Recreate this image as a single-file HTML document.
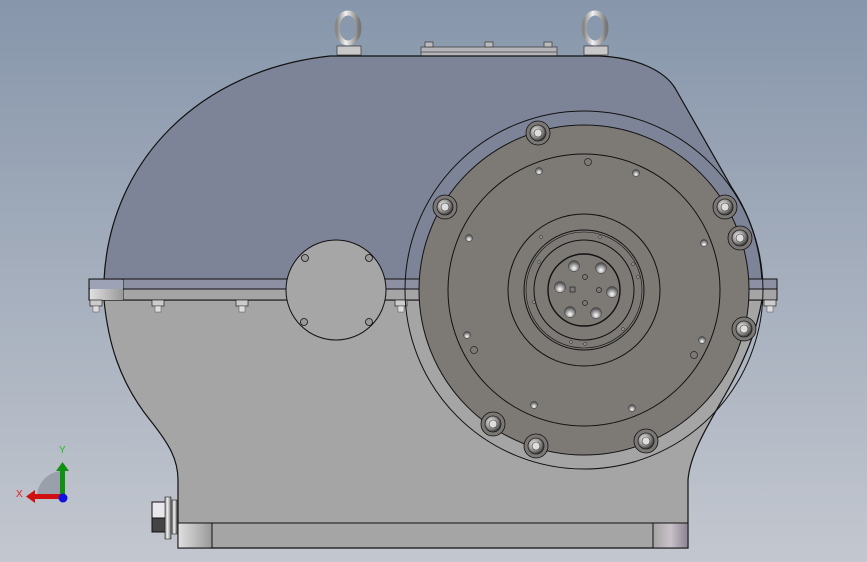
<!DOCTYPE html>
<html><head><meta charset="utf-8"><style>
html,body{margin:0;padding:0;width:867px;height:562px;overflow:hidden}
svg{display:block}
text{font-family:"Liberation Sans",sans-serif}
</style></head><body>
<svg width="867" height="562" viewBox="0 0 867 562" xmlns="http://www.w3.org/2000/svg">
<defs>
<linearGradient id="bg" x1="0" y1="0" x2="0" y2="1">
<stop offset="0" stop-color="#8796ab"/><stop offset="1" stop-color="#c3c7cf"/></linearGradient>
<radialGradient id="bolt" cx="0.4" cy="0.4" r="0.6"><stop offset="0" stop-color="#fff"/><stop offset="0.6" stop-color="#9a9896"/><stop offset="1" stop-color="#3a3a3a"/></radialGradient>
<radialGradient id="hole" cx="0.5" cy="0.7" r="0.6"><stop offset="0" stop-color="#fff"/><stop offset="1" stop-color="#555"/></radialGradient>
<linearGradient id="ring" x1="0" y1="0" x2="1" y2="0"><stop offset="0" stop-color="#888"/><stop offset="0.4" stop-color="#f2f2f2"/><stop offset="1" stop-color="#777"/></linearGradient>
<linearGradient id="blk" x1="0" y1="0" x2="1" y2="0"><stop offset="0" stop-color="#e0e0e0"/><stop offset="1" stop-color="#999"/></linearGradient>
<linearGradient id="blk2" x1="0" y1="0" x2="1" y2="0"><stop offset="0" stop-color="#a4a4a4"/><stop offset="0.5" stop-color="#c9c2c8"/><stop offset="1" stop-color="#8a8290"/></linearGradient>
<g id="b"><circle r="12" fill="#7a7774" stroke="#111" stroke-width="0.8"/><circle r="8" fill="url(#bolt)" stroke="#222" stroke-width="0.8"/><circle r="4" fill="#ddd" stroke="#333" stroke-width="0.6"/></g>
<g id="h"><circle r="3.5" fill="url(#hole)" stroke="#333" stroke-width="0.5"/></g>
<g id="H"><circle r="5.5" fill="url(#hole)" stroke="#333" stroke-width="0.5"/></g>
<g id="nut"><rect x="-6" y="0" width="12" height="6" fill="#ccc" stroke="#222" stroke-width="0.7"/><rect x="-3" y="6" width="6" height="6" fill="#ddd" stroke="#555" stroke-width="0.5"/></g>
</defs>
<rect width="867" height="562" fill="url(#bg)"/>

<!-- eye bolts -->
<g stroke="#444" stroke-width="0.8">
<ellipse cx="348" cy="28" rx="11" ry="15" fill="none" stroke="url(#ring)" stroke-width="5"/>
<rect x="337" y="46" width="24" height="9" fill="#c8c8c8"/>
<ellipse cx="595" cy="28" rx="11" ry="15" fill="none" stroke="url(#ring)" stroke-width="5"/>
<rect x="584" y="46" width="24" height="9" fill="#c8c8c8"/>
<rect x="421" y="47" width="136" height="9" fill="#b4b4b8"/>
<line x1="421" y1="52" x2="557" y2="52"/>
<rect x="425" y="42" width="8" height="5" fill="#bbb"/><rect x="485" y="42" width="8" height="5" fill="#bbb"/><rect x="544" y="42" width="8" height="5" fill="#bbb"/>
</g>

<!-- upper housing -->
<path d="M104,280 C110,160 200,70 330,56 L600,56 C640,58 665,72 675,88 L732,188 C750,215 760,245 762,280 Z" fill="#7e8497" stroke="#111" stroke-width="1.2"/>

<!-- lower housing -->
<path d="M104,300 C108,340 118,380 150,420 C170,445 178,460 178,480 L178,548 L688,548 L688,480 C690,455 705,430 725,395 C745,360 757,330 762,300 Z" fill="#a5a5a5" stroke="#111" stroke-width="1.2"/>
<line x1="178" y1="523" x2="688" y2="523" stroke="#111"/>
<rect x="178" y="523" width="34" height="25" fill="url(#blk)" stroke="#111"/>
<rect x="653" y="523" width="35" height="25" fill="url(#blk2)" stroke="#111"/>

<!-- flange -->
<rect x="89" y="279" width="688" height="21" fill="#a5a5a5" stroke="#111"/>
<rect x="89" y="279" width="688" height="10" fill="#8c90a2"/>
<line x1="89" y1="289" x2="777" y2="289" stroke="#111"/>
<rect x="89" y="279" width="688" height="21" fill="none" stroke="#111"/>
<line x1="123" y1="279" x2="123" y2="300" stroke="#111"/>
<rect x="90" y="280" width="33" height="9" fill="#9ea2b6"/>
<rect x="90" y="289" width="33" height="11" fill="url(#blk)"/>
<use href="#nut" x="96" y="300"/><use href="#nut" x="158" y="300"/><use href="#nut" x="242" y="300"/><use href="#nut" x="401" y="300"/><use href="#nut" x="770" y="300"/>

<!-- inspection cover -->
<circle cx="336" cy="290" r="50" fill="#a6a6a6" stroke="#111" stroke-width="1"/>
<g fill="#999" stroke="#111" stroke-width="0.8">
<circle cx="305" cy="258" r="3.5"/><circle cx="369" cy="258" r="3.5"/><circle cx="304" cy="322" r="3.5"/><circle cx="369" cy="322" r="3.5"/></g>

<!-- big flange -->
<circle cx="584" cy="290" r="179" fill="none" stroke="#111" stroke-width="1"/>
<circle cx="584" cy="290" r="165" fill="#7d7a76" stroke="#111" stroke-width="1"/>
<circle cx="584" cy="290" r="136" fill="none" stroke="#111" stroke-width="1"/>
<circle cx="584" cy="290" r="76" fill="none" stroke="#111" stroke-width="1"/>
<circle cx="584" cy="290" r="60" fill="none" stroke="#111" stroke-width="1"/>
<circle cx="584" cy="290" r="58" fill="none" stroke="#111" stroke-width="0.6"/>
<circle cx="584" cy="290" r="50" fill="none" stroke="#111" stroke-width="1"/>
<circle cx="584" cy="290" r="36" fill="#7d7a76" stroke="#111" stroke-width="1.4"/>
<g fill="#9a9896" stroke="#222" stroke-width="0.5">
<circle cx="541" cy="237" r="1.4"/><circle cx="539" cy="262" r="1.4"/><circle cx="534" cy="302" r="1.4"/><circle cx="571" cy="342" r="1.4"/><circle cx="585" cy="344" r="1.4"/><circle cx="623" cy="329" r="1.4"/><circle cx="638" cy="277" r="1.4"/><circle cx="633" cy="264" r="1.4"/><circle cx="600" cy="237" r="1.4"/>
</g>
<use href="#H" x="574" y="266"/><use href="#H" x="601" y="268"/><use href="#H" x="560" y="287"/><use href="#H" x="612" y="292"/><use href="#H" x="570" y="312"/><use href="#H" x="596" y="313"/>
<use href="#h" x="539" y="171"/><use href="#h" x="636" y="173"/><use href="#h" x="469" y="238"/><use href="#h" x="704" y="243"/><use href="#h" x="467" y="335"/><use href="#h" x="702" y="340"/><use href="#h" x="534" y="405"/><use href="#h" x="632" y="408"/>
<g fill="none" stroke="#222" stroke-width="0.7">
<circle cx="588" cy="162" r="3.5"/><circle cx="474" cy="350" r="3.5"/><circle cx="694" cy="355" r="3.5"/><circle cx="585" cy="277" r="2.5"/><circle cx="599" cy="290" r="2.5"/><circle cx="585" cy="303" r="2.5"/><rect x="570" y="287" width="5" height="5"/></g>

<use href="#b" x="538" y="133"/><use href="#b" x="445" y="207"/><use href="#b" x="725" y="207"/><use href="#b" x="740" y="238"/><use href="#b" x="744" y="329"/><use href="#b" x="493" y="424"/><use href="#b" x="536" y="446"/><use href="#b" x="646" y="441"/>

<!-- drain plug -->
<rect x="152" y="502" width="18" height="30" fill="#e8e8ec" stroke="#111"/>
<rect x="152" y="518" width="18" height="14" fill="#444" stroke="#111"/>
<rect x="165" y="497" width="6" height="42" fill="url(#ring)" stroke="#222" stroke-width="0.6"/>
<rect x="172" y="500" width="5" height="34" fill="url(#ring)" stroke="#222" stroke-width="0.6"/>

<!-- triad -->
<path d="M37,496 A26,26 0 0 1 62,471 L62,496 Z" fill="#9aa0ab"/>
<rect x="60" y="470" width="5" height="26" fill="#109010"/>
<path d="M56,471 L62.5,462 L69,471 Z" fill="#109010"/>
<rect x="34" y="494" width="28" height="5" fill="#d01010"/>
<path d="M35,490 L26,496.5 L35,503 Z" fill="#d01010"/>
<circle cx="63" cy="498" r="4.5" fill="#1010e0"/>
<text x="59" y="453" font-size="10" fill="#20c020">Y</text>
<text x="16" y="497" font-size="10" fill="#e02020">X</text>
</svg>
</body></html>
